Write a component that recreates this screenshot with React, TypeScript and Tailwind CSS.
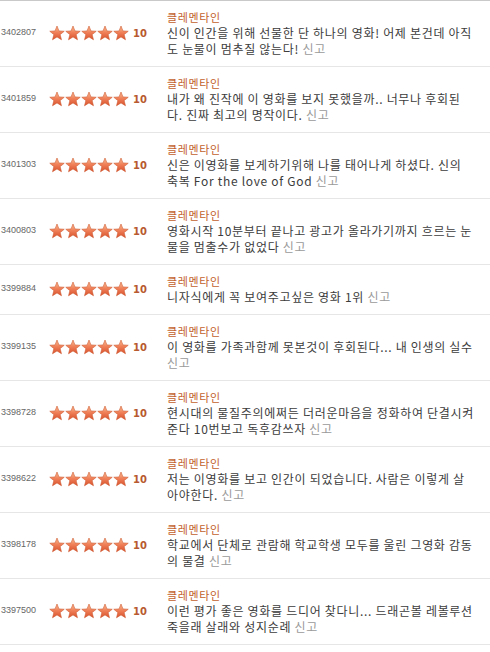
import React from "react";

type Review = { id: string; lines: string[] };

const reviews: Review[] = [
  { id: "3402807", lines: ["신이 인간을 위해 선물한 단 하나의 영화! 어제 본건데 아직", "도 눈물이 멈추질 않는다!"] },
  { id: "3401859", lines: ["내가 왜 진작에 이 영화를 보지 못했을까.. 너무나 후회된", "다. 진짜 최고의 명작이다."] },
  { id: "3401303", lines: ["신은 이영화를 보게하기위해 나를 태어나게 하셨다. 신의", "축복 For the love of God"] },
  { id: "3400803", lines: ["영화시작 10분부터 끝나고 광고가 올라가기까지 흐르는 눈", "물을 멈출수가 없었다"] },
  { id: "3399884", lines: ["니자식에게 꼭 보여주고싶은 영화 1위"] },
  { id: "3399135", lines: ["이 영화를 가족과함께 못본것이 후회된다... 내 인생의 실수", ""] },
  { id: "3398728", lines: ["현시대의 물질주의에쩌든 더러운마음을 정화하여 단결시켜", "준다 10번보고 독후감쓰자"] },
  { id: "3398622", lines: ["저는 이영화를 보고 인간이 되었습니다. 사람은 이렇게 살", "아야한다."] },
  { id: "3398178", lines: ["학교에서 단체로 관람해 학교학생 모두를 울린 그영화 감동", "의 물결"] },
  { id: "3397500", lines: ["이런 평가 좋은 영화를 드디어 찾다니... 드래곤볼 레볼루션", "죽을래 살래와 성지순례"] },
];

function Star() {
  return (
    <svg width="16" height="16" viewBox="0 0 16 16">
      <defs>
        <linearGradient id="sg" x1="0" y1="0" x2="0" y2="1">
          <stop offset="0" stopColor="#fbc29c" />
          <stop offset="0.45" stopColor="#f0825a" />
          <stop offset="1" stopColor="#d8512c" />
        </linearGradient>
      </defs>
      <polygon
        points="8,1 9.94,5.93 15.23,6.25 11.14,9.62 12.47,14.75 8,11.9 3.53,14.75 4.86,9.62 0.77,6.25 6.06,5.93"
        fill="url(#sg)"
        stroke="#cf5a33"
        strokeWidth="0.6"
        strokeLinejoin="round"
      />
    </svg>
  );
}

export default function App() {
  return (
    <div className="w-[490px] h-[652px] bg-white border-t border-[#c9c9c9]" style={{ fontFamily: '"Noto Sans CJK KR", sans-serif' }}>
      {reviews.map((r) => (
        <div key={r.id} className="flex items-center border-b border-[#e6e6e6] pt-[8px] pb-[9px]">
          <div className="flex items-center w-[167px] shrink-0">
            <div
              className="w-[48px] pl-[1px] text-[9px] text-[#666666]"
              style={{ fontFamily: '"Liberation Sans", sans-serif' }}
            >
              {r.id}
            </div>
            <div className="flex items-center pl-[1px]">
              <Star />
              <Star />
              <Star />
              <Star />
              <Star />
            </div>
            <div
              className="ml-[4px] text-[10px] font-bold text-[#b85a30]"
              style={{ fontFamily: '"DejaVu Sans", sans-serif' }}
            >
              10
            </div>
          </div>
          <div className="flex-1 leading-[16px]">
            <div className="text-[11px] tracking-[0.6px] text-[#c2612c]">클레멘타인</div>
            <div className="text-[12px] tracking-[0.7px] text-[#3c3c3c] whitespace-nowrap">
              {r.lines.map((l, i) => (
                <div key={i}>
                  {l}
                  {i === r.lines.length - 1 && (
                    <>
                      {l ? " " : ""}
                      <span className="text-[#9a9a9a]">신고</span>
                    </>
                  )}
                </div>
              ))}
            </div>
          </div>
        </div>
      ))}
    </div>
  );
}
